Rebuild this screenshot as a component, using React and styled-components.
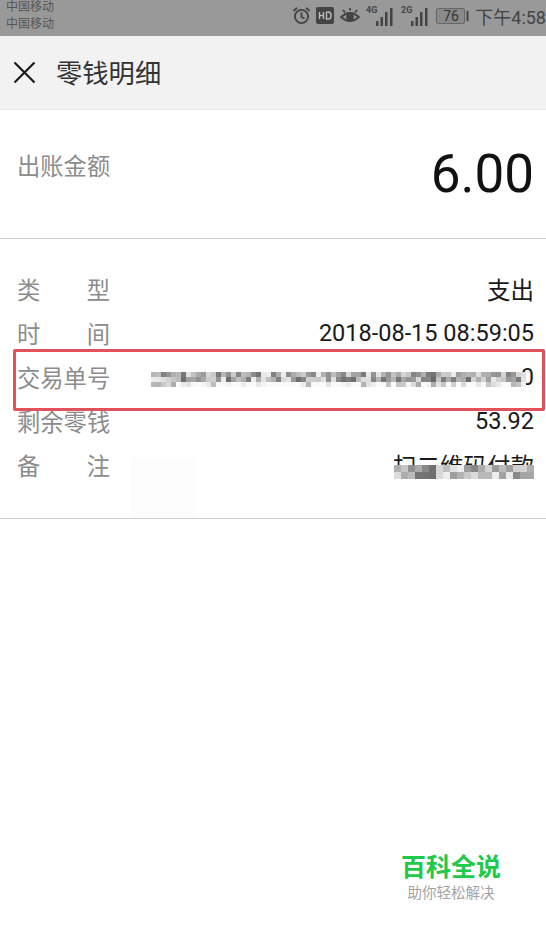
import React from 'react'
import styled, { createGlobalStyle } from 'styled-components'

const GlobalStyle = createGlobalStyle`
  html, body { margin: 0; padding: 0; background: #fff; }
  body { font-family: Roboto, "Noto Sans CJK SC", sans-serif; }
`

const Page = styled.div`
  width: 546px;
  height: 934px;
  display: flex;
  flex-direction: column;
  overflow: hidden;
  position: relative;
`

const StatusBar = styled.div`
  height: 36px;
  background: #999999;
  display: flex;
  justify-content: space-between;
  padding: 0 0 0 6px;
  color: #4a4a4a;
`

const Carriers = styled.div`
  display: flex;
  flex-direction: column;
  font-size: 12px;
  line-height: 17px;
  color: #555;
  margin-top: -1px;
`

const StatusRight = styled.div`
  display: flex;
  align-items: center;
  height: 31px;
`

const Clock = styled.span`
  font-size: 18px;
  color: #444;
  margin-left: 6px;
  white-space: nowrap;
`

const Header = styled.div`
  height: 73px;
  background: #f2f2f2;
  border-bottom: 1px solid #e6e6e6;
  display: flex;
  align-items: center;
  padding-left: 13px;
  gap: 20px;
`

const Title = styled.div`
  font-size: 26.3px;
  color: #333;
  position: relative;
  top: -1px;
`

const AmountRow = styled.div`
  height: 128px;
  border-bottom: 1px solid #cfcfcf;
  display: flex;
  justify-content: space-between;
  padding: 0 12px 0 17px;
`

const AmountLabel = styled.div`
  font-size: 23.3px;
  color: #8c8c8c;
  margin-top: 42px;
  line-height: 30px;
`

const AmountValue = styled.div`
  font-size: 53px;
  color: #111;
  margin-top: 33px;
  line-height: 62px;
`

const Details = styled.div`
  height: 280px;
  box-sizing: border-box;
  border-bottom: 1px solid #cfcfcf;
  padding: 28px 12px 0 17px;
  position: relative;
`

const Row = styled.div`
  height: 44px;
  display: flex;
  justify-content: space-between;
  align-items: center;
  position: relative;
`

const Label = styled.div`
  font-size: 23.3px;
  color: #8c8c8c;
  width: 93px;
  white-space: nowrap;
  display: flex;
  justify-content: space-between;
`

const Value = styled.div`
  font-size: 23.5px;
  color: #1a1a1a;
  white-space: nowrap;
`

const Mosaic = styled.svg`
  position: absolute;
  right: ${({ $right }) => $right}px;
  top: ${({ $top }) => $top}px;
  display: block;
`

const Highlight = styled.div`
  position: absolute;
  left: 13px;
  right: 1px;
  top: 349px;
  height: 62px;
  box-sizing: border-box;
  border: 3px solid #e0525c;
  border-radius: 2px;
`

// leftover of the blur over the white background, barely visible
const Smudge = styled.div`
  position: absolute;
  left: 130px;
  top: 458px;
  width: 66px;
  height: 60px;
  background: #fdfdfd;
`

const Brand = styled.div`
  margin-top: auto;
  margin-bottom: 30px;
  align-self: flex-end;
  margin-right: 45px;
  display: flex;
  flex-direction: column;
  align-items: center;
`

const BrandName = styled.div`
  font-size: 25px;
  font-weight: 700;
  color: #1fc94a;
  line-height: 32px;
`

const BrandTag = styled.div`
  font-size: 14.5px;
  color: #a3a3a3;
  line-height: 20px;
`

// seeded grey blocks, so the blur looks the same on every load
const blocks = (cols, rows, seed, size) => {
  const out = []
  let s = seed
  for (let y = 0; y < rows; y++) {
    for (let x = 0; x < cols; x++) {
      s = (s * 9301 + 49297) % 233280
      const r = Math.pow(s / 233280, 0.8)
      const fade = rows > 2 && y === rows - 1 ? 60 : 0
      const v = Math.min(250, 105 + Math.floor(r * 135) + fade)
      out.push(
        <rect key={x + '-' + y} x={x * size} y={y * size} width={size} height={size} fill={`rgb(${v},${v},${v})`} />
      )
    }
  }
  return out
}

const CloseIcon = () => (
  <svg width="23" height="23" viewBox="0 0 23 23" fill="none" stroke="#1c1c1c" strokeWidth="2.2">
    <path d="M1.5 1.5 L21.5 21.5 M21.5 1.5 L1.5 21.5" />
  </svg>
)

const AlarmIcon = () => (
  <svg width="19" height="19" viewBox="0 0 19 19" fill="none" stroke="#444" strokeWidth="1.9">
    <circle cx="9.5" cy="10.5" r="6.6" />
    <path d="M9.5 6.5 V11 L12.5 12.5 M1.5 5 L5 1.8 M17.5 5 L14 1.8" />
  </svg>
)

const HdIcon = () => (
  <svg width="18" height="17" viewBox="0 0 18 17" style={{ marginLeft: 5 }}>
    <rect width="18" height="17" rx="2" fill="#444" />
    <path d="M3.5 5 V12 M7.5 5 V12 M3.5 8.5 H7.5 M10.5 5 V12 H12.5 Q15 12 15 8.5 Q15 5 12.5 5 H10.5" fill="none" stroke="#bbb" strokeWidth="1.4" />
  </svg>
)

const EyeIcon = () => (
  <svg width="20" height="18" viewBox="0 0 20 18" fill="none" stroke="#444" strokeWidth="1.8" style={{ marginLeft: 6 }}>
    <path d="M1 10 Q10 2 19 10 Q10 18 1 10 Z" />
    <circle cx="10" cy="10" r="3" fill="#444" />
    <path d="M3 3 L5 5.5 M10 1 V3.5 M17 3 L15 5.5" />
  </svg>
)

const SignalIcon = ({ net, left }) => (
  <svg width="29" height="22" viewBox="0 0 29 22" style={{ marginLeft: left }}>
    <text x="0" y="8" fontSize="9" fontWeight="700" fill="#444" fontFamily="Roboto">{net}</text>
    <rect x="10" y="16" width="2.5" height="5" fill="#444" />
    <rect x="14.5" y="12" width="2.5" height="9" fill="#444" />
    <rect x="19" y="7" width="2.5" height="14" fill="#444" />
    <rect x="24" y="3" width="2.5" height="18" fill="#444" />
  </svg>
)

const BatteryIcon = () => (
  <svg width="33" height="16" viewBox="0 0 33 16" style={{ marginLeft: 6 }}>
    <rect x="0.5" y="0.5" width="28" height="15" rx="1.5" fill="#8a8a8a" stroke="#666" />
    <rect x="30.5" y="3" width="2" height="10" fill="#444" />
    <text x="15" y="13" textAnchor="middle" fontSize="14" fill="#333" fontFamily="Roboto">76</text>
  </svg>
)

const App = () => (
  <Page>
    <GlobalStyle />
    <StatusBar>
      <Carriers>
        <span>中国移动</span>
        <span>中国移动</span>
      </Carriers>
      <StatusRight>
        <AlarmIcon />
        <HdIcon />
        <EyeIcon />
        <SignalIcon net="4G" left={6} />
        <SignalIcon net="2G" left={6} />
        <BatteryIcon />
        <Clock>下午4:58</Clock>
      </StatusRight>
    </StatusBar>
    <Header>
      <CloseIcon />
      <Title>零钱明细</Title>
    </Header>
    <AmountRow>
      <AmountLabel>出账金额</AmountLabel>
      <AmountValue>6.00</AmountValue>
    </AmountRow>
    <Details>
      <Row>
        <Label><span>类</span><span>型</span></Label>
        <Value>支出</Value>
      </Row>
      <Row>
        <Label><span>时</span><span>间</span></Label>
        <Value>2018-08-15 08:59:05</Value>
      </Row>
      <Row>
        <Label>交易单号</Label>
        <Value>0</Value>
        <Mosaic $top={17} $right={8} width="375" height="15" viewBox="0 0 375 15">
          {blocks(75, 3, 7, 5)}
        </Mosaic>
      </Row>
      <Row>
        <Label>剩余零钱</Label>
        <Value>53.92</Value>
      </Row>
      <Row>
        <Label><span>备</span><span>注</span></Label>
        <Value>扫二维码付款</Value>
        <Mosaic $top={22} $right={0} width="140" height="14" viewBox="0 0 140 14">
          {blocks(20, 2, 31, 7)}
        </Mosaic>
      </Row>
    </Details>
    <Smudge />
    <Highlight />
    <Brand>
      <BrandName>百科全说</BrandName>
      <BrandTag>助你轻松解决</BrandTag>
    </Brand>
  </Page>
)

export default App
